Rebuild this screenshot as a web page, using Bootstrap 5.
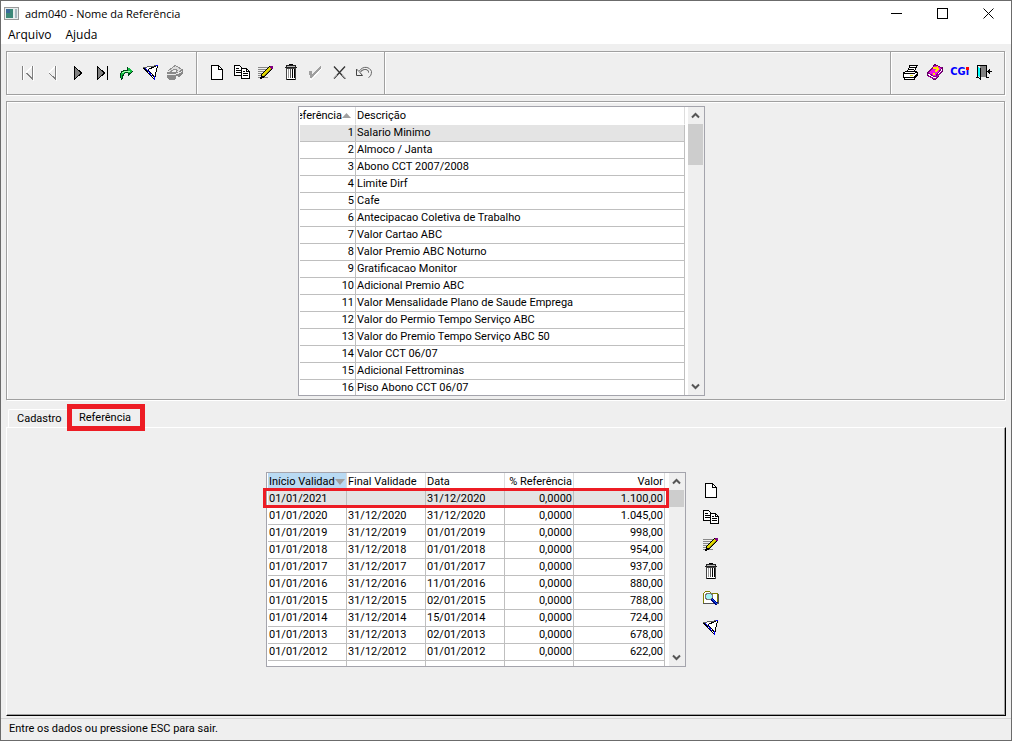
<!DOCTYPE html>
<html lang="pt-BR">
<head>
<meta charset="utf-8">
<meta name="viewport" content="width=device-width, initial-scale=1">
<title>adm040 - Nome da Referência</title>
<link href="https://cdn.jsdelivr.net/npm/bootstrap@5.3.0/dist/css/bootstrap.min.css" rel="stylesheet">
<style>
  body { font: 11px/16px Roboto, "Liberation Sans", Arial, sans-serif; color: #000; background: #efefef; }
  .app-window { border: 1px solid #6b6b6b; }
  .caption-font { font-family: "Open Sans", "Segoe UI", sans-serif; font-size: 12px; }
  .title-bar { height: 25px; padding-left: 3px; }
  .title-bar .btn { width: 46px; height: 25px; }
  .title-text { font-size: 11px; line-height: 16px; font-weight: 400; margin-left: 6px; }
  .menu-row { height: 18px; padding-left: 7px; gap: 14px; line-height: 18px; }
  .menu-row a { color: #000; text-decoration: none; }
  .btn { border: 0; border-radius: 0; padding: 0; line-height: 1; display: flex; align-items: center; justify-content: center; }
  svg { display: block; flex: none; }
  .pixel { shape-rendering: crispEdges; }

  .etched { border: 1px solid #a0a0a0; box-shadow: inset 1px 1px 0 #fff, 1px 1px 0 #fff; margin: 0 6px 0 5px; }
  .tool-strip { margin-top: 7px; height: 44px; }
  .tool-group { padding: 0 9px 2px; border-right: 1px solid #a0a0a0; box-shadow: inset 1px 0 0 #fff; }
  .tool-group:last-child { border-right: 0; }
  .tool-group .btn { width: 22px; height: 24px; }
  .nav-group { width: 190px; padding: 0 10px 2px; }
  .edit-group { width: 188px; }
  .app-group { width: 113px; }
  .cgi-mark { position: relative; color: #00f; font: bold 11px/12px "DejaVu Sans Condensed", sans-serif; }
  .cgi-mark::after { content: ""; position: absolute; right: 0; top: 1px; width: 3px; height: 3px; background: #f00; }

  .list-pane { margin-top: 6px; padding: 4px 8px 3px 0; }
  .grid-box { position: relative; border: 1px solid #a4a4ac; background: #fff; padding-left: 1px; }
  .grid-view { overflow: hidden; }
  .data-grid { table-layout: fixed; border-collapse: separate; border-spacing: 0; }
  .data-grid th, .data-grid td { height: 17px; padding: 0 1px; line-height: 16px; border-right: 1px solid #bfbfbf; border-bottom: 1px solid #bfbfbf; white-space: nowrap; overflow: hidden; }
  .data-grid th { height: 18px; padding-top: 1px; font-weight: 400; border-color: #ddd; border-bottom-color: #fff; text-align: left; }
  .data-grid .num { text-align: right; }
  .data-grid .picked td { background: #e4e4e4; }
  .data-grid .sorted { background: #b9daf3; }
  .head-line { display: flex; align-items: center; overflow: hidden; }
  .head-line span { overflow: hidden; }
  .ref-grid { width: 385px; }
  .ref-view { height: 288px; }
  .value-grid { width: 397px; }
  .value-view { height: 193px; }
  .bar-v { width: 16px; background: #efefef; margin-left: 3px; padding-right: 1px; }
  .value-view + .bar-v { margin-left: 4px; }
  .bar-v .btn { height: 17px; width: 15px; }
  .thumb { background: #cdcdcd; height: 41px; }
  .thumb.short-thumb { height: 17px; }
  .row-frame { position: absolute; left: -4px; right: 16px; top: 15px; height: 20px; border: 3px solid #ed1c24; pointer-events: none; }

  .nav-tabs.tab-row { border: 0; margin: 4px 0 0 7px; height: 23px; align-items: flex-end; }
  .tab-row .nav-link { border-radius: 0; color: #000; background: #efefef; border: 0; line-height: 16px; }
  .tab-row .plain-tab { height: 19px; width: 59px; padding: 1px 0 2px 8px; text-align: left; border-top: 1px solid #fff; border-left: 1px solid #fff; border-top-left-radius: 2px; }
  .tab-row .framed-tab { position: relative; z-index: 1; height: 27px; width: 78px; padding: 0 0 0 7px; border: 5px solid #ed1c24; text-align: left; margin-bottom: -4px; background: #efefef; }
  .detail-pane { margin: 0 5px 0 5px; padding: 44px 26px 0 0; border-top: 1px solid #fff; border-left: 1px solid #fff; border-right: 1px solid #000; border-bottom: 1px solid #000; box-shadow: inset -1px -1px 0 #a0a0a0; }
  .side-tools { margin-left: 16px; padding-top: 4px; }
  .side-tools .btn { width: 18px; height: 27px; }
  .side-tools .btn:last-child { margin-top: 2px; }
  .status-row { margin-top: 2px; border-top: 1px solid #d4d4d4; padding: 2px 8px 3px; }
</style>
</head>
<body>
<svg width="0" height="0" class="position-absolute" aria-hidden="true">
  <symbol id="i-first" viewBox="0 0 18 18"><path d="M3.5 3v14" stroke="#808080"/><path d="M4.500 3v14" stroke="#fff"/><path d="M7 9.500 13.500 3" stroke="#fff" stroke-width="2"/><path d="M7.500 10 13.500 16V3" fill="none" stroke="#808080"/><path d="M14.500 3v15" stroke="#fff"/></symbol>
  <symbol id="i-prev" viewBox="0 0 18 18"><path d="M5 9.500 11.500 3" stroke="#fff" stroke-width="2"/><path d="M5 10 11.500 16V3" fill="none" stroke="#808080"/><path d="M12.500 3v15" stroke="#fff"/></symbol>
  <symbol id="i-next" viewBox="0 0 18 18"><path d="M6 3v14l8-7z" fill="#808080"/><path d="M6.500 3.500v13l7-6.500z" fill="none" stroke="#000"/></symbol>
  <symbol id="i-last" viewBox="0 0 18 18"><path d="M4 3v14l8-7z" fill="#808080"/><path d="M4.500 3.500v13l7-6.500z" fill="none" stroke="#000"/><path d="M14.500 3v14" stroke="#000"/></symbol>
  <symbol id="i-redo" viewBox="0 0 18 18"><path d="M5 16.500C1 12 4 7 10 7V3.500L16 8l-5 4.500V10C8 9 5 11 6 15.500z" fill="#10c040"/><path d="M5 16.500C1 12 4 7 10 7V3.500M16 8l-5 4.500V10C8 9 5 11 6 15.500" fill="none" stroke="#004018"/><path d="M5 10 9 8h4" stroke="#a8ffb0" fill="none"/></symbol>
  <symbol id="i-filter" viewBox="0 0 18 18"><path d="M2 4.500 15.500 2 12.500 16z" fill="#fff"/><path d="M3 5l4 3 5 8z" fill="#00f"/><path d="M1 4.500 12.500 16.500M6 6.500l6 7M6 6.500 15.500 2.500" fill="none" stroke="#000"/><path d="M1 4.500 15.500 2.500" stroke="#606060"/><path d="M15.500 2.500 12.500 16" stroke="#000"/><path d="M12.500 13v4M14 2.500h2" stroke="#00f"/></symbol>
  <symbol id="i-tool" viewBox="0 0 18 18"><path d="M1 9h8l7-3h1v5l-4 3-3-1v2l-2 2H3l-2-3z" fill="#888"/><path d="M2 8 9 2l7 4-4 3-3-2-5 2z" fill="#ddd"/><path d="M2 8 9 2.500l7 4M4 9l5-3 3 2" fill="none" stroke="#909090"/><path d="M1 11.500h8l7-3" fill="none" stroke="#e8e8e8"/></symbol>
  <symbol id="i-new" viewBox="0 0 18 18"><path d="M3.500 2.500h7l4 4v10h-11z" fill="#fff" stroke="#000"/><path d="M10.500 2v4.500H14" fill="none" stroke="#000"/></symbol>
  <symbol id="i-copy" viewBox="0 0 18 18"><path d="M1.500 2.500h5l3 3v7h-8z" fill="#fff" stroke="#000"/><path d="M3 5.500h3M3 7.500h5M3 9.500h5" stroke="#000"/><path d="M8.500 5.500h5l3 3v7h-8z" fill="#fff" stroke="#000"/><path d="M13.500 5v3.500H17M10 8.500h2M10 10.500h5M10 12.500h5" fill="none" stroke="#000"/></symbol>
  <symbol id="i-edit" viewBox="0 0 18 18"><path d="M1 4.500h10M1 6.500h9M1 8.500h7M1 10.500h6M1 12.500h5M1 14.500h10" stroke="#888"/><path d="M3.500 15.500 5 11l8-8 3 2-8 8z" fill="#e0d800" stroke="#000"/><path d="M7 13 14 6" stroke="#888000"/><path d="M3 16l1-4 3 3z"/><path d="M13 3h3v3h-2z" fill="#800080"/></symbol>
  <symbol id="i-trash" viewBox="0 0 18 18"><path d="M4.500 5v11l1 .5h7l1-.5V5z" fill="#fff" stroke="#444"/><path d="M6.500 6v9" stroke="#999"/><path d="M8.500 6v9" stroke="#555"/><path d="M10.500 6v9M12.500 6v9" stroke="#000"/><path d="M3.500 4.500 5 2.500h8l1.500 2z" fill="#bbb" stroke="#222"/><path d="M7 1.500h4M5 16.500h8" stroke="#000"/></symbol>
  <symbol id="i-check" viewBox="0 0 18 18"><path d="M4 9v7h2L16 5" stroke="#fff" stroke-width="1" fill="none"/><path d="M3 8h3v3L15 3v2L6 15H4z" fill="#a0a0a0"/></symbol>
  <symbol id="i-cancel" viewBox="0 0 18 18"><path d="M3 3.500 14 15.500M14 3.500 3 15.500" stroke="#333" stroke-width="1.300"/><path d="M11 12l4 4M3 15l3-3" stroke="#999"/></symbol>
  <symbol id="i-undo" viewBox="0 0 18 18"><path d="M1.500 6v6.500h6L5 9.500C8 5 14 6 13.500 9.500" fill="none" stroke="#444"/><path d="M1.500 6 4 8.500C8 2 15 4 16.500 8.500c0 3-1 5-3 6" fill="none" stroke="#666"/></symbol>
  <symbol id="i-print" viewBox="0 0 18 18"><path d="M5.500 8 8 2.500h7L12 9z" fill="#fff" stroke="#000"/><path d="M8 4.500h5M7 6.500h5" stroke="#000"/><path d="M1.500 10 4 8.500h10l1 1v3l-3 4H3l-1.500-2z" fill="#fff" stroke="#000"/><path d="M2 10.500h10l3-2M2 14.500h10l3-3" fill="none" stroke="#000"/><path d="M8 12.500h3" stroke="#e0d800"/></symbol>
  <symbol id="i-help" viewBox="0 0 18 18"><path d="M1.500 10 9 1.500 16.500 5v3L9 17 1.500 12z" fill="#fff" stroke="#600060"/><path d="M2 10 9 2l7 3-7 9z" fill="#f010e0" stroke="#800080"/><path d="M2 13l7 3 7-8" fill="none" stroke="#a000a0"/><path d="M7 5.500l4-1 1 2-3 2M7 10.500h2" stroke="#ffe800" stroke-width="2" fill="none"/></symbol>
  <symbol id="i-exit" viewBox="0 0 18 18"><path d="M2.500 14V2.500h9V14M1 14.500h3M11 14.500h3" fill="none" stroke="#000"/><path d="M5 3h6v11H5z" fill="#808080"/><path d="M3 4l2 1v10l-2-2z" fill="#0ff"/><path d="M5.500 5v11L2.500 14" fill="none" stroke="#000"/><path d="M12 8.500h5M14.500 6v5" stroke="#000"/><path d="M12 8.500l3-3v6z"/></symbol>
  <symbol id="i-search" viewBox="0 0 18 18"><path d="M1.500 14.500v-10l2-2h4l2 2h6v10z" fill="#fff" stroke="#808000"/><path d="M1 14.500h15V5" fill="none" stroke="#555"/><circle cx="7" cy="7.500" r="3.500" fill="#a0f4f4" stroke="#777"/><path d="M9.500 10 15 15" stroke="#000080" stroke-width="3"/><path d="M10 10l5 5" stroke="#0060ff"/></symbol>
  <symbol id="i-up" viewBox="0 0 9 7"><path d="M1 5.500 4.500 2 8 5.500" fill="none" stroke="#555" stroke-width="2"/></symbol>
  <symbol id="i-down" viewBox="0 0 9 7"><path d="M1 1.500 4.500 5 8 1.500" fill="none" stroke="#555" stroke-width="2"/></symbol>
</svg>

<div class="app-window d-flex flex-column min-vh-100">
  <header class="bg-white caption-font">
    <div class="title-bar d-flex align-items-center">
      <svg width="15" height="13" viewBox="0 0 15 13"><rect x=".5" y=".5" width="14" height="12" fill="#e8eeee" stroke="#999"/><rect x="2" y="2" width="7" height="9" fill="#3c8878"/><rect x="2" y="2" width="4" height="4" fill="#3a6a9a"/><rect x="11" y="2" width="2" height="9" fill="#a8b8c0"/></svg>
      <h1 class="title-text mb-0 me-auto">adm040 - Nome da Referência</h1>
      <button class="btn" type="button" aria-label="Minimizar"><svg class="pixel" width="11" height="11"><path d="M0 5.500h11" stroke="#000"/></svg></button>
      <button class="btn" type="button" aria-label="Maximizar"><svg class="pixel" width="11" height="11"><path d="M.5.5h10v10H.5z" fill="none" stroke="#000"/></svg></button>
      <button class="btn" type="button" aria-label="Fechar"><svg width="11" height="11"><path d="M.5.5l10 10M10.500.5l-10 10" stroke="#000"/></svg></button>
    </div>
    <nav class="menu-row d-flex"><a href="#">Arquivo</a><a href="#">Ajuda</a></nav>
  </header>

  <div class="etched tool-strip d-flex" role="toolbar" aria-label="Ferramentas">
    <div class="tool-group nav-group d-flex align-items-center justify-content-between">
      <button class="btn" type="button" aria-label="Primeiro"><svg class="pixel" width="18" height="18"><use href="#i-first"/></svg></button>
      <button class="btn" type="button" aria-label="Anterior"><svg class="pixel" width="18" height="18"><use href="#i-prev"/></svg></button>
      <button class="btn" type="button" aria-label="Próximo"><svg class="pixel" width="18" height="18"><use href="#i-next"/></svg></button>
      <button class="btn" type="button" aria-label="Último"><svg class="pixel" width="18" height="18"><use href="#i-last"/></svg></button>
      <button class="btn" type="button" aria-label="Ir para"><svg class="pixel" width="18" height="18"><use href="#i-redo"/></svg></button>
      <button class="btn" type="button" aria-label="Filtrar"><svg class="pixel" width="18" height="18"><use href="#i-filter"/></svg></button>
      <button class="btn" type="button" aria-label="Utilitários"><svg class="pixel" width="18" height="18"><use href="#i-tool"/></svg></button>
    </div>
    <div class="tool-group edit-group d-flex align-items-center justify-content-between">
      <button class="btn" type="button" aria-label="Novo"><svg class="pixel" width="18" height="18"><use href="#i-new"/></svg></button>
      <button class="btn" type="button" aria-label="Copiar"><svg class="pixel" width="18" height="18"><use href="#i-copy"/></svg></button>
      <button class="btn" type="button" aria-label="Editar"><svg class="pixel" width="18" height="18"><use href="#i-edit"/></svg></button>
      <button class="btn" type="button" aria-label="Excluir"><svg class="pixel" width="18" height="18"><use href="#i-trash"/></svg></button>
      <button class="btn" type="button" aria-label="Confirmar"><svg class="pixel" width="18" height="18"><use href="#i-check"/></svg></button>
      <button class="btn" type="button" aria-label="Cancelar"><svg width="18" height="18"><use href="#i-cancel"/></svg></button>
      <button class="btn" type="button" aria-label="Desfazer"><svg width="18" height="18"><use href="#i-undo"/></svg></button>
    </div>
    <div class="tool-group flex-grow-1"></div>
    <div class="tool-group app-group d-flex align-items-center justify-content-between">
      <button class="btn" type="button" aria-label="Imprimir"><svg class="pixel" width="18" height="18"><use href="#i-print"/></svg></button>
      <button class="btn" type="button" aria-label="Manual"><svg class="pixel" width="18" height="18"><use href="#i-help"/></svg></button>
      <button class="btn" type="button"><span class="cgi-mark">CGi</span></button>
      <button class="btn" type="button" aria-label="Sair"><svg class="pixel" width="18" height="18"><use href="#i-exit"/></svg></button>
    </div>
  </div>

  <main class="d-flex flex-column flex-grow-1">
    <section class="etched list-pane d-flex justify-content-center">
      <div class="grid-box d-flex">
        <div class="grid-view ref-view">
          <table class="data-grid ref-grid">
            <colgroup><col style="width:56px"><col></colgroup>
            <thead><tr><th class="p-0"><div class="head-line justify-content-end"><span class="flex-shrink-0">Referência</span><svg width="9" height="5"><path d="M0 5 4.500 0 9 5z" fill="#a0a0a0"/></svg><span class="ps-1"></span></div></th><th>Descrição</th></tr></thead>
            <tbody>
              <tr class="picked"><td class="num">1</td><td>Salario Minimo</td></tr>
              <tr><td class="num">2</td><td>Almoco / Janta</td></tr>
              <tr><td class="num">3</td><td>Abono CCT 2007/2008</td></tr>
              <tr><td class="num">4</td><td>Limite Dirf</td></tr>
              <tr><td class="num">5</td><td>Cafe</td></tr>
              <tr><td class="num">6</td><td>Antecipacao Coletiva de Trabalho</td></tr>
              <tr><td class="num">7</td><td>Valor Cartao ABC</td></tr>
              <tr><td class="num">8</td><td>Valor Premio ABC Noturno</td></tr>
              <tr><td class="num">9</td><td>Gratificacao Monitor</td></tr>
              <tr><td class="num">10</td><td>Adicional Premio ABC</td></tr>
              <tr><td class="num">11</td><td>Valor Mensalidade Plano de Saude Emprega</td></tr>
              <tr><td class="num">12</td><td>Valor do Permio Tempo Serviço ABC</td></tr>
              <tr><td class="num">13</td><td>Valor do Premio Tempo Serviço ABC 50</td></tr>
              <tr><td class="num">14</td><td>Valor CCT 06/07</td></tr>
              <tr><td class="num">15</td><td>Adicional Fettrominas</td></tr>
              <tr><td class="num">16</td><td>Piso Abono CCT 06/07</td></tr>
            </tbody>
          </table>
        </div>
        <div class="bar-v d-flex flex-column">
          <button class="btn" type="button" aria-label="Rolar para cima"><svg width="9" height="7"><use href="#i-up"/></svg></button>
          <div class="thumb"></div>
          <button class="btn mt-auto" type="button" aria-label="Rolar para baixo"><svg width="9" height="7"><use href="#i-down"/></svg></button>
        </div>
      </div>
    </section>

    <div class="nav nav-tabs tab-row" role="tablist">
      <button class="nav-link plain-tab" type="button" role="tab" aria-selected="false">Cadastro</button>
      <button class="nav-link framed-tab" type="button" role="tab" aria-selected="true">Referência</button>
    </div>

    <section class="detail-pane flex-grow-1 d-flex justify-content-center align-items-start" role="tabpanel">
      <div class="grid-box d-flex">
        <div class="grid-view value-view">
          <table class="data-grid value-grid">
            <colgroup><col style="width:79px"><col style="width:79px"><col style="width:79px"><col style="width:69px"><col></colgroup>
            <thead><tr><th class="sorted"><div class="head-line"><span>Início Validade</span><svg width="10" height="6"><path d="M0 0h10L5 6z" fill="#a0a0a0"/></svg></div></th><th>Final Validade</th><th>Data</th><th class="num">% Referência</th><th class="num">Valor</th></tr></thead>
            <tbody>
              <tr class="picked"><td>01/01/2021</td><td></td><td>31/12/2020</td><td class="num">0,0000</td><td class="num">1.100,00</td></tr>
              <tr><td>01/01/2020</td><td>31/12/2020</td><td>31/12/2020</td><td class="num">0,0000</td><td class="num">1.045,00</td></tr>
              <tr><td>01/01/2019</td><td>31/12/2019</td><td>01/01/2019</td><td class="num">0,0000</td><td class="num">998,00</td></tr>
              <tr><td>01/01/2018</td><td>31/12/2018</td><td>01/01/2018</td><td class="num">0,0000</td><td class="num">954,00</td></tr>
              <tr><td>01/01/2017</td><td>31/12/2017</td><td>01/01/2017</td><td class="num">0,0000</td><td class="num">937,00</td></tr>
              <tr><td>01/01/2016</td><td>31/12/2016</td><td>11/01/2016</td><td class="num">0,0000</td><td class="num">880,00</td></tr>
              <tr><td>01/01/2015</td><td>31/12/2015</td><td>02/01/2015</td><td class="num">0,0000</td><td class="num">788,00</td></tr>
              <tr><td>01/01/2014</td><td>31/12/2014</td><td>15/01/2014</td><td class="num">0,0000</td><td class="num">724,00</td></tr>
              <tr><td>01/01/2013</td><td>31/12/2013</td><td>02/01/2013</td><td class="num">0,0000</td><td class="num">678,00</td></tr>
              <tr><td>01/01/2012</td><td>31/12/2012</td><td>01/01/2012</td><td class="num">0,0000</td><td class="num">622,00</td></tr>
              <tr><td></td><td></td><td></td><td></td><td></td></tr>
            </tbody>
          </table>
        </div>
        <div class="bar-v d-flex flex-column">
          <button class="btn" type="button" aria-label="Rolar para cima"><svg width="9" height="7"><use href="#i-up"/></svg></button>
          <div class="thumb short-thumb"></div>
          <button class="btn mt-auto" type="button" aria-label="Rolar para baixo"><svg width="9" height="7"><use href="#i-down"/></svg></button>
        </div>
        <div class="row-frame"></div>
      </div>
      <div class="side-tools d-flex flex-column">
        <button class="btn" type="button" aria-label="Novo valor"><svg class="pixel" width="18" height="18"><use href="#i-new"/></svg></button>
        <button class="btn" type="button" aria-label="Copiar valor"><svg class="pixel" width="18" height="18"><use href="#i-copy"/></svg></button>
        <button class="btn" type="button" aria-label="Editar valor"><svg class="pixel" width="18" height="18"><use href="#i-edit"/></svg></button>
        <button class="btn" type="button" aria-label="Excluir valor"><svg class="pixel" width="18" height="18"><use href="#i-trash"/></svg></button>
        <button class="btn" type="button" aria-label="Consultar valor"><svg class="pixel" width="18" height="18"><use href="#i-search"/></svg></button>
        <button class="btn" type="button" aria-label="Filtrar valores"><svg class="pixel" width="18" height="18"><use href="#i-filter"/></svg></button>
      </div>
    </section>
  </main>

  <footer class="status-row">Entre os dados ou pressione ESC para sair.</footer>
</div>
<script src="https://cdn.jsdelivr.net/npm/bootstrap@5.3.0/dist/js/bootstrap.bundle.min.js"></script>
</body>
</html>
